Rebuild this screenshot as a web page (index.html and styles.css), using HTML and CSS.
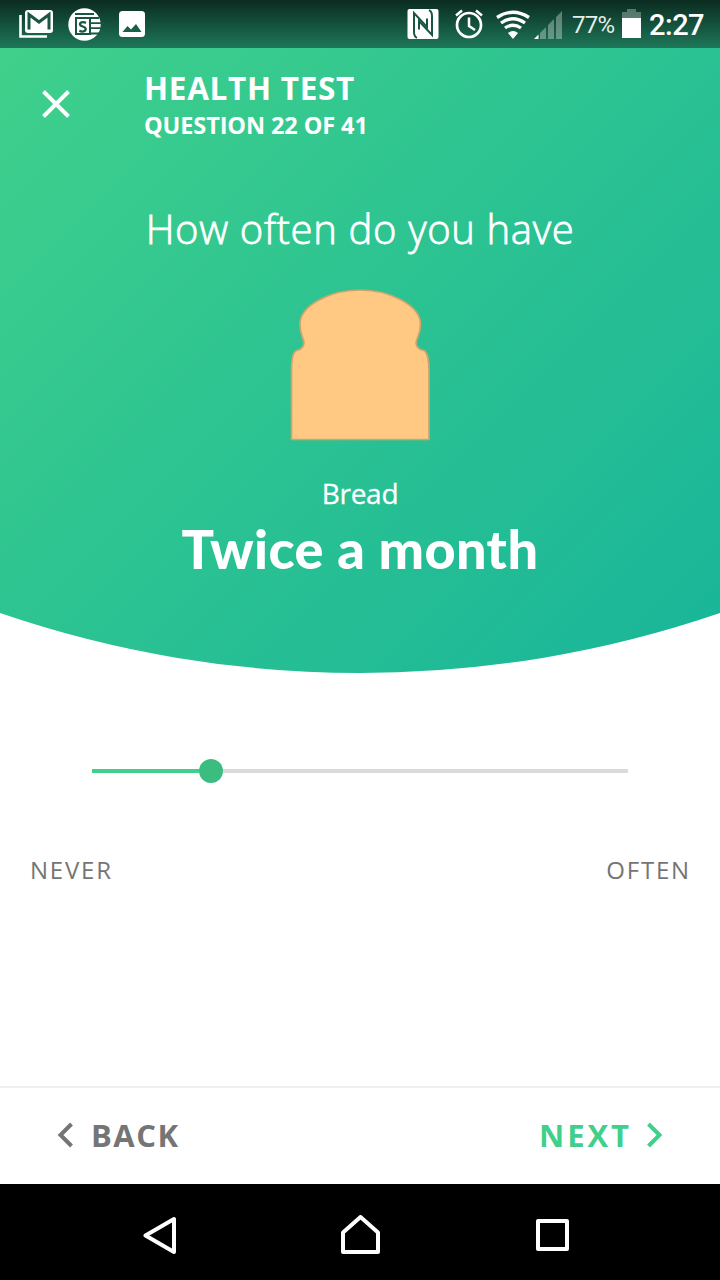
FILE: index.html
```html
<!DOCTYPE html>
<html lang="en">
<head>
<meta charset="utf-8">
<title>Health Test</title>
<link rel="stylesheet" href="styles.css">
</head>
<body>
<div class="screen">
  <section class="hero">
    <header class="status">
      <svg class="status-icons" width="160" height="48" viewBox="0 0 160 48">
        <path d="M20.500 15V36.500H47" fill="none" stroke="#fff" stroke-width="2.600"/>
        <rect x="25" y="10" width="28" height="23" rx="3" fill="#fff"/>
        <path d="M29 29.500V14.500L39 22L49 14.500V29.500" fill="none" stroke="#1a5640" stroke-width="3"/>
        <circle cx="84.500" cy="24.500" r="16.200" fill="#fff"/>
        <path d="M75 14H94M75 18H99M91 23.200H104M91 28.200H104M91 33.500H100" stroke="#195640" stroke-width="1.800"/>
        <path d="M76 18V34H90V18" fill="none" stroke="#195640" stroke-width="2"/>
        <path d="M86 22.800C82.500 21.500 79.800 22.300 80 24.500C80.300 27 85.700 26 85.700 29C85.700 31.800 82 32.200 79.300 30.800" fill="none" stroke="#195640" stroke-width="2.300"/>
        <rect x="119" y="11" width="26" height="26" rx="3.500" fill="#fff"/>
        <path d="M122.500 32L127.500 26L131 29.500L136 24L141.500 32Z" fill="#1a6048"/>
      </svg>
      <div class="status-right">
        <svg width="163" height="48" viewBox="400 0 163 48">
          <rect x="407.500" y="9" width="31" height="30" rx="2" fill="#fff"/>
          <path d="M417 37.800Q414 36.500 414 32V13L427 27V18.500" fill="none" stroke="#195640" stroke-width="2"/>
          <path d="M429 10.200Q432 11.500 432 16V35L419 21V29.500" fill="none" stroke="#195640" stroke-width="2"/>
          <circle cx="469" cy="25" r="12" fill="none" stroke="#fff" stroke-width="2.700"/>
          <path d="M469 17.500V26L475 30M456 15.500L462 10.500M476 10.500L482 15.500" fill="none" stroke="#fff" stroke-width="2.500"/>
          <g fill="none" stroke="#fff" stroke-width="3.300"><path d="M497 17.500Q513 7 529 17.500M501 23Q513 14.500 525 23M505 28Q513 22.500 521 28"/></g>
          <path d="M508 33Q513 29 518 33L513 39Z" fill="#fff"/>
          <path d="M534 39L538.500 34.500V39Z" fill="#fff"/>
          <path d="M540 33L546 27V39H540ZM548 25L554 19V39H548ZM556 17L562 11V39H556Z" fill="#fff" opacity=".33"/>
        </svg>
        <span class="percent">77%</span>
        <svg class="battery" width="19" height="48" viewBox="0 0 19 48"><path d="M0 12H5V9H14V12H19V18H0Z" fill="#fff" opacity=".3"/><path d="M0 18H19V38H0Z" fill="#fff"/></svg>
        <span class="clock">2:27</span>
      </div>
    </header>
    <div class="topbar">
      <svg class="close" width="28" height="28" viewBox="0 0 28 28"><path d="M1.500 1.500L26.500 26.500M26.500 1.500L1.500 26.500" stroke="#fff" stroke-width="3.900"/></svg>
      <div class="titles">
        <h1 class="title"><span>HEALTH TEST</span></h1>
        <p class="progress"><span>QUESTION 22 OF 41</span></p>
      </div>
    </div>
    <p class="question"><span>How often do you have</span></p>
    <svg class="bread" width="142" height="154" viewBox="289 288 142 154">
      <path d="M291.500 439.500V370C291.500 360 293 352 296.500 350.500C300 350 304 347 304 343C304 339 300 335 300 324C300 306 329 290 360 290C391 290 420.500 306 420.500 324C420.500 335 416 339 416 343C416 347 420 350 424 350.500C427 352 429 360 429 370V439.500Z" fill="#ffc983" stroke="#c9a66f" stroke-width="1.700"/>
    </svg>
    <p class="food"><span>Bread</span></p>
    <p class="answer"><span>Twice a month</span></p>
  </section>
  <main class="choice">
    <div class="slider"><div class="fill"></div><div class="thumb"></div><div class="rest"></div></div>
    <div class="range"><span class="never">NEVER</span><span class="often">OFTEN</span></div>
  </main>
  <footer class="actions">
    <div class="action"><svg width="16" height="26" viewBox="0 0 16 26"><path d="M14.500 2L3.500 13L14.500 24" fill="none" stroke="currentColor" stroke-width="4"/></svg><span class="back">BACK</span></div>
    <div class="action next-action"><span class="next">NEXT</span><svg width="16" height="26" viewBox="0 0 16 26"><path d="M1.500 2L12.500 13L1.500 24" fill="none" stroke="currentColor" stroke-width="4"/></svg></div>
  </footer>
  <nav class="navbar">
    <svg width="34" height="40" viewBox="0 0 34 40"><path d="M2.500 20.500L31 4V37Z" fill="none" stroke="#fff" stroke-width="4" stroke-linejoin="round"/></svg>
    <svg width="40" height="40" viewBox="0 0 40 40"><path d="M3 37V17.500L20.500 2L38 17.500V37Z" fill="none" stroke="#fff" stroke-width="4" stroke-linejoin="round"/></svg>
    <svg width="34" height="40" viewBox="0 0 34 40"><rect x="3" y="6" width="29" height="28" fill="none" stroke="#fff" stroke-width="4" stroke-linejoin="round"/></svg>
  </nav>
</div>
</body>
</html>
```
FILE: styles.css
```css
* { box-sizing: border-box; }
body, h1, p { margin: 0; }
body { font-family: "Open Sans", "Noto Sans", sans-serif; background: #fff; }
svg { display: block; flex: none; }
span { white-space: nowrap; }
.screen { width: 720px; height: 1280px; display: flex; flex-direction: column; overflow: hidden; }
.hero { height: 673px; flex: none; color: #fff; background: linear-gradient(135deg, #41d18b 0%, #2cc392 50%, #18b599 100%); clip-path: path("M0 0H720V613A1110 1110 0 0 1 0 613Z"); }
.status { height: 48px; display: flex; justify-content: space-between; background: linear-gradient(#0b2b20, #1d7759); font-family: Roboto, sans-serif; }
.status-right { display: flex; width: 320px; line-height: 50px; }
.percent { width: 59px; padding-left: 9px; font-size: 24px; letter-spacing: -0.7px; color: #e4eeea; }
.clock { padding-left: 8px; font-size: 29px; font-weight: 500; letter-spacing: -0.5px; }
.topbar { display: flex; padding: 20px 0 0 42px; }
.close { margin-top: 22px; }
.titles { margin-left: 74px; }
.title, .progress { line-height: 38px; font-weight: 700; }
.title { height: 38px; line-height: 40px; font-size: 31.500px; letter-spacing: 0.7px; }
.progress { font-size: 23.500px; letter-spacing: -0.1px; }
.question { margin-top: 56px; line-height: 58px; height: 56px; font-size: 40px; font-weight: 300; letter-spacing: 0.65px; text-align: center; -webkit-text-stroke: 0.8px #fff; }
.bread { margin: 32px auto 33px; }
.food { line-height: 36px; font-size: 28px; font-weight: 500; letter-spacing: -0.3px; text-align: center; -webkit-text-stroke: 0.3px #fff; }
.answer { line-height: 76px; font-family: Lato, sans-serif; font-size: 54px; font-weight: 900; letter-spacing: 0.4px; text-align: center; }
.choice { height: 413px; flex: none; padding-top: 86px; }
.slider { display: flex; align-items: center; height: 24px; margin: 0 92px; }
.fill { width: 107px; height: 4px; background: #41d08c; }
.thumb { width: 24px; height: 24px; border-radius: 50%; background: #3cbd80; }
.rest { flex: 1; height: 4px; background: #dadada; }
.range { display: flex; justify-content: space-between; margin-top: 69px; padding: 0 29px 0 30px; line-height: 36px; font-size: 24px; letter-spacing: 1.800px; color: #757575; }
.actions { height: 98px; flex: none; display: flex; justify-content: space-between; padding: 0 57px; border-top: 2px solid #f0f0f0; line-height: 94px; font-size: 31px; font-weight: 700; }
.action { display: flex; align-items: center; gap: 18px; height: 94px; color: #757575; }
.back { letter-spacing: 1.500px; }
.next { letter-spacing: 2.900px; margin-right: -2.900px; }
.next-action { color: #41d08c; }
.navbar { height: 96px; flex: none; display: flex; align-items: center; padding: 6px 0 0 143px; background: #000; }
.navbar svg:nth-child(2) { margin: 0 155px 0 163px; }
```
